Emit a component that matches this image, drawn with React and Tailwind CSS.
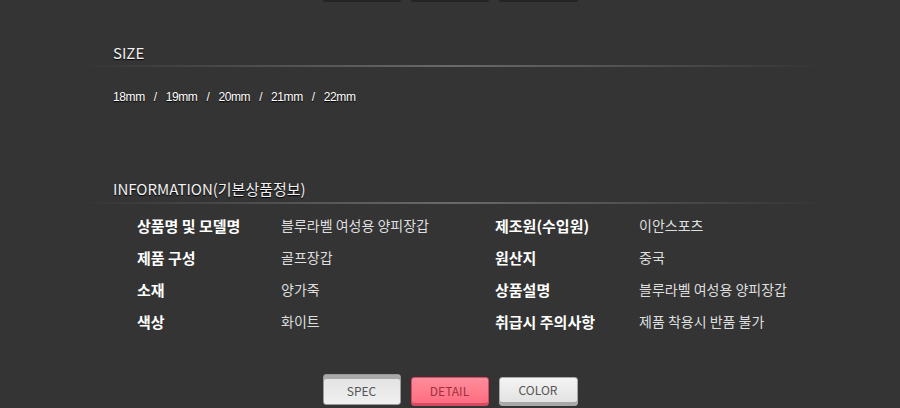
const font = {
  fontFamily: '"Noto Sans CJK KR", "Liberation Sans", sans-serif',
};

const rows = [
  ["상품명 및 모델명", "블루라벨 여성용 양피장갑", "제조원(수입원)", "이안스포츠"],
  ["제품 구성", "골프장갑", "원산지", "중국"],
  ["소재", "양가죽", "상품설명", "블루라벨 여성용 양피장갑"],
  ["색상", "화이트", "취급시 주의사항", "제품 착용시 반품 불가"],
];

const sizes = ["18mm", "19mm", "20mm", "21mm", "22mm"];

function Divider() {
  return (
    <div className="h-[2px] w-full bg-gradient-to-r from-transparent via-[#6a6a6a] to-transparent" />
  );
}

function SectionTitle({ children }) {
  return (
    <div className="pl-[33px] text-[15px] leading-none text-[#f2f2f2] [text-shadow:0_1px_1px_#000]">
      {children}
    </div>
  );
}

export default function App() {
  return (
    <div className="h-[408px] w-[900px] overflow-hidden bg-[#343434]" style={font}>
      <div className="flex h-[2px] justify-center gap-[10px]">
        <div className="w-[78px] rounded-b bg-[#232323]" />
        <div className="w-[78px] rounded-b bg-[#232323]" />
        <div className="w-[79px] rounded-b bg-[#232323]" />
      </div>

      <div className="mx-[80px] w-[745px]">
        <div className="pt-[43px]">
          <SectionTitle>SIZE</SectionTitle>
        </div>
        <div className="mt-[5px]">
          <Divider />
        </div>
        <div
          className="mt-[24px] flex items-center gap-[9px] pl-[33px] text-[12px] leading-none tracking-[-0.4px] text-white [text-shadow:0_1px_1px_#000]"
          style={{ fontFamily: '"Liberation Sans", sans-serif' }}
        >
          {sizes.map((s, i) => (
            <span key={s} className="flex items-center gap-[9px]">
              {i > 0 && <span>/</span>}
              <span>{s}</span>
            </span>
          ))}
        </div>

        <div className="pt-[78px]">
          <SectionTitle>INFORMATION(기본상품정보)</SectionTitle>
        </div>
        <div className="mt-[6px]">
          <Divider />
        </div>

        <div className="mt-[5px] pl-[57px]">
          {rows.map((r) => (
            <div key={r[0]} className="flex h-[32px] items-center leading-none">
              <div className="w-[144px] text-[15px] font-bold text-white">{r[0]}</div>
              <div className="w-[214px] text-[14px] text-[#dedede]">{r[1]}</div>
              <div className="w-[144px] text-[15px] font-bold text-white">{r[2]}</div>
              <div className="text-[14px] text-[#dedede]">{r[3]}</div>
            </div>
          ))}
        </div>
      </div>

      <div className="mt-[37px] flex justify-center gap-[10px]">
        <button className="flex h-[31px] w-[78px] items-center justify-center rounded-[3px] border border-[#9a9a9a] bg-gradient-to-b from-[#e2e2e2] to-[#f0f0f0] pt-[3px] text-[12px] leading-none text-[#555] shadow-[inset_0_4px_0_#a8a8a8]">
          SPEC
        </button>
        <button className="mt-[3px] flex h-[29px] w-[78px] items-center justify-center rounded-[3px] border border-[#d9485e] bg-gradient-to-b from-[#ff8c9b] to-[#ff6b7f] pb-[2px] text-[12px] leading-none text-[#a0303f] shadow-[inset_0_-2px_0_#d44a5e]">
          DETAIL
        </button>
        <button className="mt-[3px] flex h-[29px] w-[79px] items-center justify-center rounded-[3px] border border-[#a8a8a8] bg-gradient-to-b from-[#f4f4f4] to-[#e0e0e0] pb-[3px] text-[12px] leading-none text-[#555] shadow-[inset_0_-3px_0_#a8a8a8]">
          COLOR
        </button>
      </div>
    </div>
  );
}
